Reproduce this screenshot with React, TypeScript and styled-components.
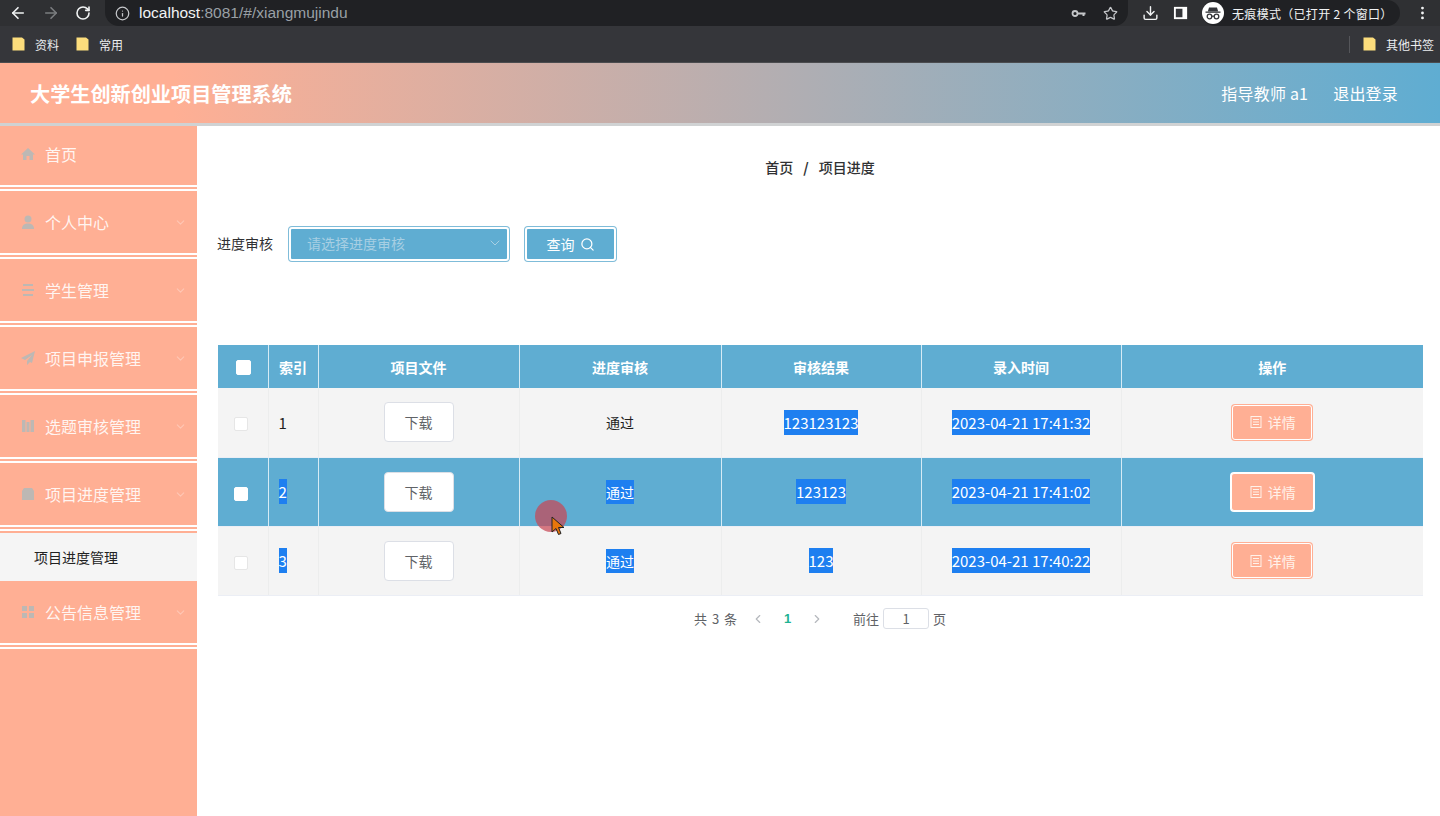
import React from 'react';
import styled, { createGlobalStyle } from 'styled-components';
import {
  ArrowLeft,
  ArrowRight,
  RotateCw,
  Info,
  Star,
  Download,
  EllipsisVertical,
  ChevronDown,
  ChevronLeft,
  ChevronRight,
  Search,
} from 'lucide-react';

const coral = '#ffaf94';
const blue = '#5fadd2';
const cjk = '"Noto Sans CJK SC", "Liberation Sans", sans-serif';

const GlobalStyle = createGlobalStyle`
  html, body {
    margin: 0;
    padding: 0;
    height: 100%;
    overflow: hidden;
    background: #fff;
    font-family: ${cjk};
  }
  #root {
    height: 100%;
  }
  * {
    box-sizing: border-box;
  }
`;

type Row = {
  id: number;
  result: string;
  time: string;
  idSelected?: boolean;
  statusSelected?: boolean;
  active?: boolean;
};

const rows: Row[] = [
  { id: 1, result: '123123123', time: '2023-04-21 17:41:32' },
  {
    id: 2,
    result: '123123',
    time: '2023-04-21 17:41:02',
    idSelected: true,
    statusSelected: true,
    active: true,
  },
  {
    id: 3,
    result: '123',
    time: '2023-04-21 17:40:22',
    idSelected: true,
    statusSelected: true,
  },
];

const HomeIcon = () => (
  <svg width="16" height="16" viewBox="0 0 16 16" fill="currentColor">
    <path d="M8 2 1 8.500h2V14h3.500v-4h3v4H13V8.500h2z" />
  </svg>
);
const UserIcon = () => (
  <svg width="16" height="16" viewBox="0 0 16 16" fill="currentColor">
    <circle cx="8" cy="5" r="3.500" />
    <path d="M2 15c0-4 2.500-5.500 6-5.500s6 1.500 6 5.500z" />
  </svg>
);
const LinesIcon = () => (
  <svg width="16" height="16" viewBox="0 0 16 16" fill="currentColor">
    <rect x="3" y="2" width="10" height="2" />
    <rect x="2" y="7" width="12" height="2" />
    <rect x="3" y="12" width="10" height="2" />
  </svg>
);
const SendIcon = () => (
  <svg width="16" height="16" viewBox="0 0 16 16" fill="currentColor">
    <path d="M15 1 1 8l4 2 7-5-5 6v4l3-3 2 1z" />
  </svg>
);
const BarsIcon = () => (
  <svg width="16" height="16" viewBox="0 0 16 16" fill="currentColor">
    <path d="M2 2h3.500v12H2zM6.500 4h3v10h-3zM10.500 2H14v12h-3.500z" />
  </svg>
);
const DocIcon = () => (
  <svg width="16" height="16" viewBox="0 0 16 16" fill="currentColor">
    <path d="M4 2h8l2 3v9H2V5z" />
  </svg>
);
const GridIcon = () => (
  <svg width="16" height="16" viewBox="0 0 16 16" fill="currentColor">
    <rect x="2" y="2" width="5" height="5" />
    <rect x="9" y="2" width="5" height="5" />
    <rect x="2" y="9" width="5" height="5" />
    <rect x="9" y="9" width="5" height="5" />
  </svg>
);

const menu = [
  { label: '首页', icon: <HomeIcon /> },
  { label: '个人中心', icon: <UserIcon />, arrow: true },
  { label: '学生管理', icon: <LinesIcon />, arrow: true },
  { label: '项目申报管理', icon: <SendIcon />, arrow: true },
  { label: '选题审核管理', icon: <BarsIcon />, arrow: true },
  { label: '项目进度管理', icon: <DocIcon />, arrow: true, sub: '项目进度管理' },
  { label: '公告信息管理', icon: <GridIcon />, arrow: true },
];

const KeyIcon = () => (
  <svg width="15" height="15" viewBox="0 0 15 15">
    <circle cx="4" cy="7.500" r="2.500" fill="none" stroke="#c5c7ca" strokeWidth="1.800" />
    <path d="M6.500 6.500H14.500V8.500H13.500V10H11.500V8.500H6.500z" fill="#c5c7ca" />
  </svg>
);

const IncognitoIcon = () => (
  <svg width="22" height="22" viewBox="0 0 22 22">
    <circle cx="11" cy="11" r="11" fill="#fff" />
    <path d="M7 5.500h8l1.200 4H5.800z" fill="#35363a" />
    <rect x="3.500" y="9.500" width="15" height="1.300" fill="#35363a" />
    <circle cx="7.500" cy="14.500" r="2.300" fill="none" stroke="#35363a" strokeWidth="1.300" />
    <circle cx="14.500" cy="14.500" r="2.300" fill="none" stroke="#35363a" strokeWidth="1.300" />
    <path d="M9.800 14.200h2.400" stroke="#35363a" strokeWidth="1.200" />
  </svg>
);

const FolderIcon = () => (
  <svg width="13" height="14" viewBox="0 0 13 14">
    <path d="M0.500 0.500h9.500l2.500 2v11H0.500z" fill="#fcdd7c" />
  </svg>
);

const PanelIcon = () => (
  <svg width="16" height="16" viewBox="0 0 16 16">
    <rect x="1" y="1.500" width="14" height="13" fill="#fff" />
    <rect x="3" y="3.500" width="7" height="9" fill="#35363a" />
  </svg>
);

const DetailIcon = () => (
  <svg width="14" height="14" viewBox="0 0 14 14" fill="none" stroke="currentColor" strokeWidth="1">
    <rect x="2" y="1.500" width="10" height="11" />
    <path d="M4 4.500h6M4 7h6M4 9.500h6" />
  </svg>
);

const Cursor = () => (
  <svg width="16" height="22" viewBox="0 0 16 22">
    <path d="M1 1v15l4-3.500 2.500 6 2.500-1-2.500-6H13z" fill="#e8760c" stroke="#222" strokeWidth="1" />
  </svg>
);

const App = () => {
  return (
    <Page>
      <GlobalStyle />
      <BrowserBar>
        <NavIcons>
          <ArrowLeft size={18} color="#f1f3f4" strokeWidth={2.2} />
          <ArrowRight size={18} color="#7b7d80" strokeWidth={2.2} />
          <RotateCw size={16} color="#f1f3f4" strokeWidth={2.4} />
        </NavIcons>
        <Address>
          <Info size={15} color="#c5c7ca" />
          <Url>
            <b>localhost</b>:8081/#/xiangmujindu
          </Url>
          <AddressEnd>
            <KeyIcon />
            <Star size={15} color="#c5c7ca" />
          </AddressEnd>
        </Address>
        <Download size={18} color="#f1f3f4" />
        <PanelIcon />
        <Incognito>
          <IncognitoIcon />
          <span>无痕模式（已打开 2 个窗口）</span>
        </Incognito>
        <EllipsisVertical size={18} color="#f1f3f4" />
      </BrowserBar>
      <Bookmarks>
        <Bookmark>
          <FolderIcon />
          资料
        </Bookmark>
        <Bookmark>
          <FolderIcon />
          常用
        </Bookmark>
        <OtherBookmarks>
          <FolderIcon />
          其他书签
        </OtherBookmarks>
      </Bookmarks>
      <Header>
        <Title>大学生创新创业项目管理系统</Title>
        <HeaderLinks>
          <span>指导教师 a1</span>
          <span>退出登录</span>
        </HeaderLinks>
      </Header>
      <Body>
        <Sidebar>
          {menu.map(item => (
            <React.Fragment key={item.label}>
              <MenuItem>
                <MenuIcon>{item.icon}</MenuIcon>
                <MenuLabel>{item.label}</MenuLabel>
                {item.arrow && (
                  <MenuArrow>
                    <ChevronDown size={13} />
                  </MenuArrow>
                )}
              </MenuItem>
              {item.sub && <SubItem>{item.sub}</SubItem>}
            </React.Fragment>
          ))}
        </Sidebar>
        <Content>
          <Breadcrumb>
            <span>首页</span>
            <Slash>/</Slash>
            <span>项目进度</span>
          </Breadcrumb>
          <SearchForm>
            <FieldLabel>进度审核</FieldLabel>
            <SelectBox>
              <span>请选择进度审核</span>
              <ChevronDown size={16} strokeWidth={1.5} />
            </SelectBox>
            <QueryButton>
              查询
              <Search size={15} />
            </QueryButton>
          </SearchForm>
          <Table>
            <colgroup>
              <col width="50" />
              <col width="50" />
              <col width="201" />
              <col width="202" />
              <col width="200" />
              <col width="200" />
              <col width="302" />
            </colgroup>
            <thead>
              <tr>
                <HeadCell>
                  <CheckBox $head />
                </HeadCell>
                <HeadCell>索引</HeadCell>
                <HeadCell>项目文件</HeadCell>
                <HeadCell>进度审核</HeadCell>
                <HeadCell>审核结果</HeadCell>
                <HeadCell>录入时间</HeadCell>
                <HeadCell>操作</HeadCell>
              </tr>
            </thead>
            <tbody>
              {rows.map(row => (
                <tr key={row.id}>
                  <BodyCell $active={row.active}>
                    <CheckBox $active={row.active} />
                  </BodyCell>
                  <IndexCell $active={row.active}>
                    {row.idSelected ? <SelectedNumber>{row.id}</SelectedNumber> : row.id}
                  </IndexCell>
                  <BodyCell $active={row.active}>
                    <DownloadButton>下载</DownloadButton>
                  </BodyCell>
                  <BodyCell $active={row.active}>
                    {row.statusSelected ? <Selected>通过</Selected> : '通过'}
                  </BodyCell>
                  <BodyCell $active={row.active}>
                    <SelectedNumber>{row.result}</SelectedNumber>
                  </BodyCell>
                  <BodyCell $active={row.active}>
                    <SelectedNumber>{row.time}</SelectedNumber>
                  </BodyCell>
                  <BodyCell $active={row.active}>
                    <DetailButton $active={row.active}>
                      <DetailIcon />
                      详情
                    </DetailButton>
                  </BodyCell>
                </tr>
              ))}
            </tbody>
          </Table>
          <Pagination>
            <Total>共 3 条</Total>
            <PageArrows>
              <ChevronLeft size={14} />
              <CurrentPage>1</CurrentPage>
              <ChevronRight size={14} />
            </PageArrows>
            <GoTo>
              前往
              <PageInput>1</PageInput>
              页
            </GoTo>
          </Pagination>
          <ClickMark>
            <CursorSpot>
              <Cursor />
            </CursorSpot>
          </ClickMark>
        </Content>
      </Body>
    </Page>
  );
};

const Page = styled.div`
  height: 816px;
  display: flex;
  flex-direction: column;
  overflow: hidden;
`;

const BrowserBar = styled.div`
  height: 26px;
  flex: none;
  background: #2f3033;
  display: flex;
  align-items: center;
  gap: 14px;
  padding: 0 9px;
`;

const NavIcons = styled.div`
  display: flex;
  align-items: center;
  gap: 15px;
  width: 82px;
  flex: none;
`;

const Address = styled.div`
  width: 1023px;
  height: 26px;
  flex: none;
  padding: 0 10px;
  background: #202124;
  border-radius: 0 0 14px 14px;
  display: flex;
  align-items: center;
  gap: 9px;
`;

const Url = styled.span`
  font: 15.5px 'Liberation Sans', sans-serif;
  color: #9aa0a6;
  b {
    font-weight: 400;
    color: #f1f3f4;
  }
`;

const AddressEnd = styled.div`
  margin-left: auto;
  display: flex;
  align-items: center;
  gap: 17px;
`;

const Incognito = styled.div`
  width: 198px;
  height: 26px;
  flex: none;
  display: flex;
  align-items: center;
  gap: 8px;
  background: #202124;
  border-radius: 13px;
  color: #f1f3f4;
  font-size: 12px;
  letter-spacing: 0.3px;
  white-space: nowrap;
`;

const Bookmarks = styled.div`
  height: 37px;
  flex: none;
  background: #35363a;
  display: flex;
  align-items: center;
  gap: 17px;
  padding: 0 6px 0 12px;
  border-bottom: 1px solid #4b4c4f;
`;

const Bookmark = styled.div`
  display: flex;
  align-items: center;
  gap: 10px;
  color: #eceef0;
  font-size: 12px;
`;

const OtherBookmarks = styled(Bookmark)`
  margin-left: auto;
  padding-left: 13px;
  border-left: 1px solid #55565a;
`;

const Header = styled.header`
  position: relative;
  z-index: 1;
  height: 63px;
  flex: none;
  padding: 0 42px 0 30px;
  display: flex;
  align-items: center;
  justify-content: space-between;
  color: #fff;
  background: linear-gradient(90deg, ${coral} 0%, ${coral} 12%, ${blue} 100%);
  border-bottom: 3px solid #d0d2d3;
`;

const Title = styled.h1`
  margin: 0;
  font-size: 20.15px;
  font-weight: 700;
`;

const HeaderLinks = styled.div`
  display: flex;
  gap: 25px;
  font-size: 16px;
  letter-spacing: 0.2px;
`;

const Body = styled.div`
  flex: 1;
  display: flex;
  min-height: 0;
`;

const Sidebar = styled.nav`
  width: 197px;
  flex: none;
  margin-top: -3px;
  background: ${coral};
`;

const MenuItem = styled.div`
  height: 68px;
  padding: 0 10px 0 20px;
  display: flex;
  align-items: center;
  color: rgba(255, 255, 255, 0.88);
  border-bottom: 6px double #fff;
`;

const MenuIcon = styled.span`
  width: 25px;
  height: 16px;
  color: #bdb8b4;
  display: flex;
`;

const MenuLabel = styled.span`
  font-size: 16px;
`;

const MenuArrow = styled.span`
  margin-left: auto;
  display: flex;
  color: rgba(255, 255, 255, 0.3);
`;

const SubItem = styled.div`
  height: 48px;
  margin-top: 2px;
  padding-left: 34px;
  display: flex;
  align-items: center;
  background: #f5f5f5;
  color: #222;
  font-size: 14px;
`;

const Content = styled.main`
  position: relative;
  flex: 1;
  min-width: 0;
  padding: 0 17px 0 20px;
`;

const Breadcrumb = styled.div`
  height: 20px;
  margin-top: 31px;
  display: flex;
  justify-content: center;
  align-items: center;
  gap: 9px;
  font-size: 14px;
  font-weight: 500;
  color: #303133;
`;

const Slash = styled.span`
  font-weight: 700;
  padding: 0 1px;
`;

const SearchForm = styled.div`
  margin-top: 49px;
  height: 36px;
  display: flex;
  align-items: center;
`;

const FieldLabel = styled.label`
  width: 71px;
  padding-bottom: 3px;
  font-size: 14px;
  color: #303133;
`;

const SelectBox = styled.div`
  width: 220px;
  height: 34px;
  margin-left: 1px;
  padding: 0 4px 3px 16px;
  display: flex;
  align-items: center;
  justify-content: space-between;
  background: ${blue};
  border: 2px solid #fff;
  border-radius: 3px;
  box-shadow: 0 0 0 1px #7fbcd9;
  color: #a7cfe3;
  font-size: 14px;
`;

const QueryButton = styled.button`
  width: 91px;
  height: 34px;
  margin-left: 16px;
  display: flex;
  align-items: center;
  justify-content: center;
  gap: 5px;
  background: ${blue};
  border: 2px solid #fff;
  border-radius: 3px;
  box-shadow: 0 0 0 1px #7fbcd9;
  color: #fff;
  font-family: inherit;
  font-size: 14px;
`;

const Table = styled.table`
  width: 1205px;
  margin: 83px 0 0 1px;
  table-layout: fixed;
  border-collapse: collapse;
`;

const HeadCell = styled.th`
  height: 43px;
  padding: 0;
  background: ${blue};
  border-right: 1px solid #d6ebf5;
  color: #fff;
  font-size: 14px;
  font-weight: 700;
  text-align: center;
  &:last-child {
    border-right: 0;
  }
`;

const BodyCell = styled.td<{ $active?: boolean }>`
  height: 69px;
  padding: 0;
  background: ${p => (p.$active ? blue : '#f4f4f4')};
  border-right: 1px solid ${p => (p.$active ? '#d6ebf5' : '#eceded')};
  border-bottom: 1px solid #ebeef5;
  color: #1f1f1f;
  font-size: 14px;
  text-align: center;
  &:first-child {
    padding-right: 4px;
  }
  &:last-child {
    border-right: 0;
  }
`;

const IndexCell = styled(BodyCell)`
  padding-left: 10px;
  font-size: 15px;
  text-align: left;
`;

const Selected = styled.span`
  padding: 2px 0;
  background: #1e7ff0;
  color: #fff;
`;

const SelectedNumber = styled(Selected)`
  font-size: 15px;
`;

const CheckBox = styled.span<{ $head?: boolean; $active?: boolean }>`
  display: inline-block;
  width: ${p => (p.$head ? 15 : 14)}px;
  height: ${p => (p.$head ? 15 : 14)}px;
  margin: ${p => (p.$head ? '0 0 2px 1px' : '0')};
  vertical-align: middle;
  background: #fff;
  border: 1px solid ${p => (p.$head || p.$active ? '#fff' : '#e6e6e6')};
  border-radius: 2px;
`;

const DownloadButton = styled.button`
  width: 70px;
  height: 40px;
  padding: 0;
  background: #fff;
  border: 1px solid #dcdfe6;
  border-radius: 4px;
  color: #606266;
  font-family: inherit;
  font-size: 14px;
`;

const DetailButton = styled.button<{ $active?: boolean }>`
  width: ${p => (p.$active ? 83 : 80)}px;
  height: ${p => (p.$active ? 38 : 35)}px;
  padding: 0;
  display: inline-flex;
  align-items: center;
  justify-content: center;
  gap: 5px;
  vertical-align: middle;
  background: ${coral};
  border: 1px solid #fff;
  border-radius: 3px;
  box-shadow: 0 0 0 1px ${p => (p.$active ? '#fff' : coral)};
  color: #fff2ea;
  font-family: inherit;
  font-size: 14px;
`;

const Pagination = styled.div`
  height: 24px;
  margin-top: 11px;
  padding-left: 477px;
  display: flex;
  align-items: center;
  color: #606266;
  font-size: 13px;
`;

const Total = styled.span`
  word-spacing: 2px;
`;

const PageArrows = styled.div`
  width: 116px;
  padding-left: 14px;
  display: flex;
  align-items: center;
  gap: 19px;
  color: #b5b8bd;
`;

const CurrentPage = styled.span`
  color: #1fb394;
  font-weight: 700;
  font-family: 'Liberation Sans', sans-serif;
`;

const GoTo = styled.div`
  display: flex;
  align-items: center;
  gap: 4px;
`;

const PageInput = styled.span`
  width: 46px;
  height: 21px;
  display: flex;
  align-items: center;
  justify-content: center;
  border: 1px solid #dcdfe6;
  border-radius: 3px;
`;

const ClickMark = styled.div`
  position: absolute;
  left: 338px;
  top: 374px;
  width: 32px;
  height: 32px;
  border-radius: 50%;
  background: rgba(200, 70, 85, 0.72);
`;

const CursorSpot = styled.span`
  position: absolute;
  left: 16px;
  top: 16px;
  display: flex;
`;

export default App;
